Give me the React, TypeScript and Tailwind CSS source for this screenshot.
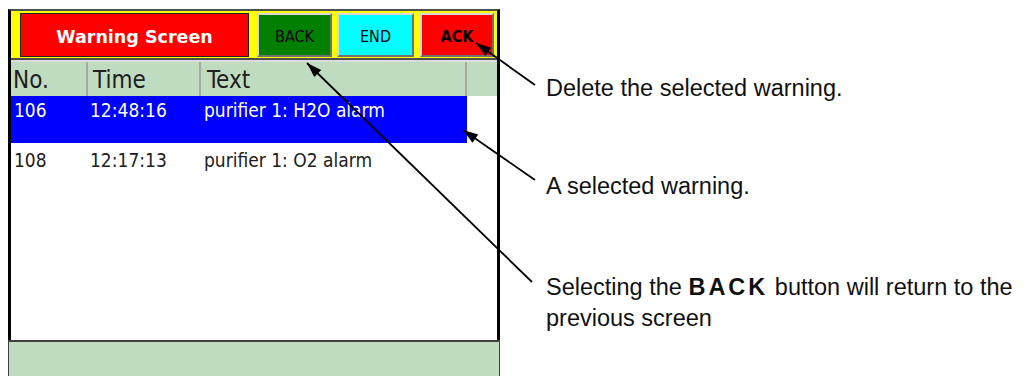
type Arrow = { x1: number; y1: number; x2: number; y2: number };

const arrows: Arrow[] = [
  { x1: 535, y1: 85, x2: 476, y2: 43 },
  { x1: 535, y1: 180, x2: 463, y2: 130 },
  { x1: 532, y1: 282, x2: 307, y2: 63 },
];

function head(a: Arrow) {
  const dx = a.x2 - a.x1;
  const dy = a.y2 - a.y1;
  const len = Math.hypot(dx, dy);
  const ux = dx / len;
  const uy = dy / len;
  const bx = a.x2 - ux * 15;
  const by = a.y2 - uy * 15;
  const px = -uy * 5;
  const py = ux * 5;
  return `${a.x2},${a.y2} ${bx + px},${by + py} ${bx - px},${by - py}`;
}

const rows = [
  { no: '106', time: '12:48:16', text: 'purifier 1: H2O alarm', selected: true },
  { no: '108', time: '12:17:13', text: 'purifier 1: O2 alarm', selected: false },
];

function TopButton({ label, className }: { label: string; className: string }) {
  return (
    <div
      className={`flex items-center justify-center border-2 border-t-[#d8d8d8] border-l-[#d8d8d8] border-r-[#707070] border-b-[#707070] text-[16px] text-black ${className}`}
    >
      {label}
    </div>
  );
}

export default function App() {
  return (
    <div className="relative flex h-[376px] w-[1033px] overflow-hidden bg-white">
      {/* device screen */}
      <div className="ml-[8px] mt-[9px] flex w-[492px] flex-col font-['DejaVu_Sans_Condensed','DejaVu_Sans',sans-serif]">
        <div className="flex h-[331px] flex-col border-x-[3px] border-t-2 border-x-black border-t-[#505050]">
          <div className="flex h-[47px] bg-[#ffff00] pb-[1px] pl-[9px] pr-[3px] pt-[2px]">
            <div className="flex w-[229px] items-center justify-center border border-[#202020] bg-[#ff0000] pt-[4px] font-['DejaVu_Sans',sans-serif] text-[17.5px] font-bold text-white">
              Warning Screen
            </div>
            <TopButton label="BACK" className="ml-[8px] w-[75px] bg-[#008000] pt-[3px]" />
            <TopButton label="END" className="ml-[5px] w-[77px] bg-[#00ffff] pt-[3px]" />
            <TopButton label="ACK" className="ml-[6px] w-[74px] bg-[#ff0000] pt-[3px] font-bold" />
          </div>
          <div className="h-[2px] bg-[#4d4d4d]" />
          <div className="h-[2px] bg-[#dcdcdc]" />
          <div className="flex h-[34px] bg-[#c0dcc0] text-[24px] leading-[31px] text-[#202020]">
            <div className="w-[77px] border-r-2 border-r-[#a8a8a8] pl-[2px] pt-[3px]">No.</div>
            <div className="w-[113px] border-r-2 border-r-[#a8a8a8] pl-[5px] pt-[3px]">Time</div>
            <div className="w-[266px] border-r-2 border-r-[#a8a8a8] pl-[6px] pt-[3px]">Text</div>
            <div className="flex-1" />
          </div>
          <div className="flex flex-1 flex-col bg-white text-[19px] leading-[24px]">
            {rows.map((r) => (
              <div
                key={r.no}
                className={`flex h-[47px] w-[456px] ${r.selected ? 'bg-[#0000ff] pt-[2px] text-white' : 'pt-[5px] text-[#202020]'}`}
              >
                <div className="w-[77px] pl-[3px]">{r.no}</div>
                <div className="w-[113px] pl-[2px]">{r.time}</div>
                <div className="flex-1 pl-[3px]">{r.text}</div>
              </div>
            ))}
          </div>
        </div>
        <div className="h-[36px] border-x border-t-2 border-[#404040] bg-[#c0dcc0]" />
      </div>

      {/* annotations */}
      <div className="ml-[46px] flex flex-col pt-[75px] font-['Liberation_Sans',Arial,sans-serif] text-[23.5px] leading-[27px] whitespace-nowrap text-[#111]">
        <p>Delete the selected warning.</p>
        <p className="mt-[71px]">A selected warning.</p>
        <p className="mt-[72px] leading-[31px]">
          Selecting the <b className="tracking-[3px]">BACK</b> button will return to the
          <br />
          previous screen
        </p>
      </div>

      <svg className="pointer-events-none absolute left-0 top-0" width="1033" height="376">
        {arrows.map((a, i) => (
          <g key={i}>
            <line x1={a.x1} y1={a.y1} x2={a.x2} y2={a.y2} stroke="black" strokeWidth="1.8" />
            <polygon points={head(a)} fill="black" />
          </g>
        ))}
      </svg>
    </div>
  );
}
